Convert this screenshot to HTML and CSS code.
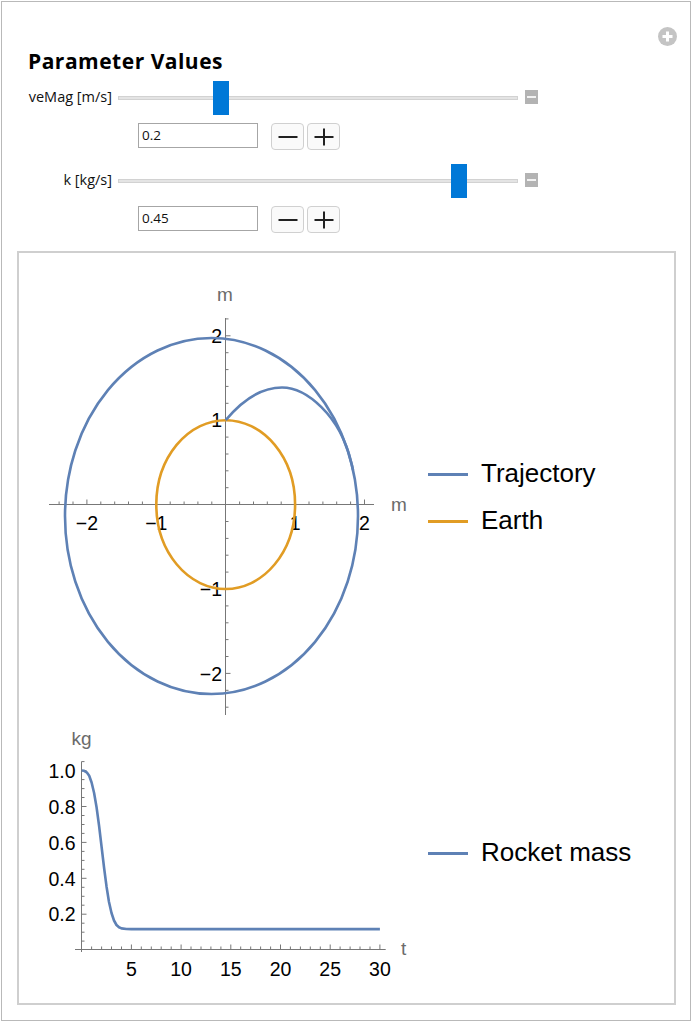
FILE: index.html
```html
<!DOCTYPE html>
<html>
<head>
<meta charset="utf-8">
<link rel="stylesheet" href="styles.css">
</head>
<body>
<div class="panel">
  <span class="add-btn">
    <svg width="19" height="19" viewBox="0 0 19 19"><circle cx="9.5" cy="9.5" r="9.5" fill="#c4c4c4"/><path d="M4.5 9.5h10M9.5 4.5v10" stroke="#fff" stroke-width="3"/></svg>
  </span>
  <h2 class="title">Parameter Values</h2>
  <div class="controls">
    <div class="slider-row">
      <span class="label">veMag [m/s]</span>
      <div class="track"><span class="thumb" style="left:23.5%"></span></div>
      <span class="collapse"><i></i></span>
    </div>
    <div class="input-row">
      <div class="field">0.2</div>
      <button class="step"><svg width="20" height="20" viewBox="0 0 20 20"><path d="M0.5 10h19" stroke="#222" stroke-width="2"/></svg></button>
      <button class="step"><svg width="20" height="20" viewBox="0 0 20 20"><path d="M0.5 10h19M10 1.5v17" stroke="#222" stroke-width="2"/></svg></button>
    </div>
    <div class="slider-row second">
      <span class="label">k [kg/s]</span>
      <div class="track"><span class="thumb" style="left:83.5%"></span></div>
      <span class="collapse"><i></i></span>
    </div>
    <div class="input-row">
      <div class="field">0.45</div>
      <button class="step"><svg width="20" height="20" viewBox="0 0 20 20"><path d="M0.5 10h19" stroke="#222" stroke-width="2"/></svg></button>
      <button class="step"><svg width="20" height="20" viewBox="0 0 20 20"><path d="M0.5 10h19M10 1.5v17" stroke="#222" stroke-width="2"/></svg></button>
    </div>
  </div>

  <div class="output">
    <div class="plot-row">
      <svg class="plot" width="400" height="472" viewBox="19 253 400 472">
        <g class="axis">
          <path d="M49 504.5H374M225.5 318V715"/>
          <path d="M225.5 707.2h3M225.5 690.3h3M225.5 656.5h3M225.5 639.6h3M225.5 622.8h3M225.5 605.9h3M225.5 572.1h3M225.5 555.2h3M225.5 538.4h3M225.5 521.5h3M225.5 487.7h3M225.5 470.8h3M225.5 454h3M225.5 437.1h3M225.5 403.3h3M225.5 386.4h3M225.5 369.6h3M225.5 352.7h3M225.5 318.9h3"/>
          <path d="M225.5 673.4h5M225.5 589h5M225.5 420.2h5M225.5 335.8h5"/>
          <path d="M59.1 504.5v-3M73 504.5v-3M100.8 504.5v-3M114.7 504.5v-3M128.5 504.5v-3M142.4 504.5v-3M170.2 504.5v-3M184.1 504.5v-3M197.9 504.5v-3M211.8 504.5v-3M239.6 504.5v-3M253.5 504.5v-3M267.3 504.5v-3M281.2 504.5v-3M309 504.5v-3M322.9 504.5v-3M336.7 504.5v-3M350.6 504.5v-3"/>
          <path d="M86.9 504.5v-5M156.3 504.5v-5M295.1 504.5v-5M364.5 504.5v-5"/>
        </g>
        <g class="ticklbl mid">
          <text x="86.9" y="530">−2</text>
          <text x="156.3" y="530">−1</text>
          <text x="295.1" y="530">1</text>
          <text x="364.5" y="530">2</text>
        </g>
        <g class="ticklbl end">
          <text x="222" y="342.8">2</text>
          <text x="222" y="427.2">1</text>
          <text x="222" y="596">−1</text>
          <text x="222" y="680.5">−2</text>
        </g>
        <text class="axlbl mid" x="225" y="301">m</text>
        <text class="axlbl" x="391" y="511">m</text>
        <ellipse class="earth" cx="225.7" cy="504.6" rx="69.4" ry="84.4"/>
        <ellipse class="traj" cx="211.5" cy="516" rx="146.5" ry="178"/>
        <path class="traj" d="M225.7 420.2C238.5 404.8 257 387.5 282 387.5C306 387.5 340 415 351.1 462L353 470"/>
      </svg>
      <ul class="legend first">
        <li><span class="swatch blue"></span>Trajectory</li>
        <li><span class="swatch orange"></span>Earth</li>
      </ul>
    </div>
    <div class="plot-row">
      <svg class="plot" width="400" height="278" viewBox="19 725 400 278">
        <g class="axis">
          <path d="M75 949.5H385.7M81.5 761.6V952"/>
          <path d="M81.5 941.1h3M81.5 932.2h3M81.5 923.2h3M81.5 905.2h3M81.5 896.3h3M81.5 887.3h3M81.5 869.3h3M81.5 860.4h3M81.5 851.4h3M81.5 833.4h3M81.5 824.5h3M81.5 815.5h3M81.5 797.5h3M81.5 788.6h3M81.5 779.6h3M81.5 761.6h3"/>
          <path d="M81.5 914.2h5M81.5 878.3h5M81.5 842.4h5M81.5 806.5h5M81.5 770.6h5"/>
          <path d="M91.6 949.5v-3M101.6 949.5v-3M111.5 949.5v-3M121.5 949.5v-3M141.3 949.5v-3M151.3 949.5v-3M161.2 949.5v-3M171.2 949.5v-3M191 949.5v-3M201 949.5v-3M210.9 949.5v-3M220.9 949.5v-3M240.7 949.5v-3M250.7 949.5v-3M260.6 949.5v-3M270.6 949.5v-3M290.4 949.5v-3M300.4 949.5v-3M310.3 949.5v-3M320.3 949.5v-3M340.1 949.5v-3M350.1 949.5v-3M360 949.5v-3M370 949.5v-3"/>
          <path d="M131.4 949.5v-5M181.1 949.5v-5M230.8 949.5v-5M280.5 949.5v-5M330.2 949.5v-5M379.9 949.5v-5"/>
        </g>
        <g class="ticklbl end">
          <text x="75.5" y="777.5">1.0</text>
          <text x="75.5" y="813.5">0.8</text>
          <text x="75.5" y="849.5">0.6</text>
          <text x="75.5" y="885.5">0.4</text>
          <text x="75.5" y="921.2">0.2</text>
        </g>
        <g class="ticklbl mid">
          <text x="131.4" y="975.5">5</text>
          <text x="181.1" y="975.5">10</text>
          <text x="230.8" y="975.5">15</text>
          <text x="280.5" y="975.5">20</text>
          <text x="330.2" y="975.5">25</text>
          <text x="379.9" y="975.5">30</text>
        </g>
        <text class="axlbl" x="71.5" y="745">kg</text>
        <text class="axlbl" x="401" y="955">t</text>
        <polyline class="traj" points="81.7,770.5 84.2,770.8 86.7,772.3 89.2,775.8 91.6,782.5 94.1,793 96.6,807.5 99.1,826 101.6,847 104.1,868 106.6,887 109,902 111.5,913 114,920.5 116.5,925 119,927.3 121.5,928.4 126.4,929 131.4,929.1 379.9,929.1"/>
      </svg>
      <ul class="legend second">
        <li><span class="swatch blue"></span>Rocket mass</li>
      </ul>
    </div>
  </div>
</div>
</body>
</html>
```
FILE: styles.css
```css
* { box-sizing: border-box; }
body {
  margin: 0;
  background: #fff;
  font-family: "Open Sans", "Noto Sans", sans-serif;
  color: #000;
}
.panel {
  position: relative;
  margin: 1px;
  width: 690px;
  height: 1020px;
  border: 1px solid #b9b9b9;
}
.add-btn {
  position: absolute;
  left: 656px;
  top: 25px;
  width: 19px;
  height: 19px;
  display: block;
}
.add-btn svg { display: block; }
.title {
  margin: 0 0 0 26px;
  padding-top: 47px;
  font-size: 21px;
  line-height: 24px;
  font-weight: 700;
  letter-spacing: 0.5px;
}
.controls {
  display: flex;
  flex-direction: column;
}
.slider-row {
  display: flex;
  align-items: center;
  height: 34px;
  margin-top: 7px;
}
.slider-row.second { margin-top: 13px; }
.label {
  width: 110px;
  text-align: right;
  font-size: 14.5px;
  line-height: 18px;
  color: #111;
}
.track {
  position: relative;
  margin-left: 6px;
  width: 400px;
  height: 4px;
  background: #e4e4e4;
  border: 1px solid #d2d2d2;
  margin-top: 1px;
}
.thumb {
  position: absolute;
  top: -16px;
  width: 16px;
  height: 34px;
  background: #0078d7;
}
.collapse {
  margin-left: 7px;
  width: 13px;
  height: 14px;
  background: #b3b3b3;
  display: flex;
  align-items: center;
  justify-content: center;
}
.collapse i {
  display: block;
  width: 9px;
  height: 2px;
  background: #f2f2f2;
}
.input-row {
  display: flex;
  align-items: flex-start;
  margin-top: 9px;
  padding-left: 136px;
  height: 27px;
}
.field {
  width: 120px;
  height: 25px;
  border: 1px solid #a6a6a6;
  font-size: 13.5px;
  line-height: 23px;
  padding-left: 3px;
  color: #111;
}
.step {
  width: 33px;
  height: 27px;
  margin: 0 0 0 3px;
  padding: 0;
  border: 1px solid #d0d0d0;
  border-radius: 4px;
  background: #fafafa;
  display: flex;
  align-items: center;
  justify-content: center;
}
.field + .step { margin-left: 13px; }
.step svg { display: block; }
.output {
  margin: 18px 0 0 15px;
  width: 659px;
  height: 754px;
  border: 2px solid #cfcfcf;
}
.plot-row {
  display: flex;
  align-items: flex-start;
}
.plot { display: block; flex: none; }
.axis path { stroke: #777; stroke-width: 1; fill: none; }
.ticklbl text {
  font-family: "Liberation Sans", Arial, sans-serif;
  font-size: 19.5px;
  fill: #000;
}
.mid, .mid text { text-anchor: middle; }
.end text { text-anchor: end; }
.axlbl {
  font-family: "Liberation Sans", Arial, sans-serif;
  font-size: 19px;
  fill: #6b6b6b;
}
.earth { fill: none; stroke: #e19c24; stroke-width: 2.6; }
.traj { fill: none; stroke: #5e81b5; stroke-width: 2.6; stroke-linejoin: round; }
.legend {
  list-style: none;
  margin: 0 0 0 9px;
  padding: 0;
  display: flex;
  flex-direction: column;
  gap: 17px;
  font-family: "Liberation Sans", Arial, sans-serif;
  font-size: 26px;
  line-height: 30px;
}
.legend.first { margin-top: 205px; }
.legend.second { margin-top: 112px; }
.legend li { display: flex; align-items: center; }
.swatch {
  width: 40px;
  height: 3px;
  margin-right: 13px;
  margin-top: 2px;
}
.swatch.blue { background: #5e81b5; }
.swatch.orange { background: #e19c24; }
```
